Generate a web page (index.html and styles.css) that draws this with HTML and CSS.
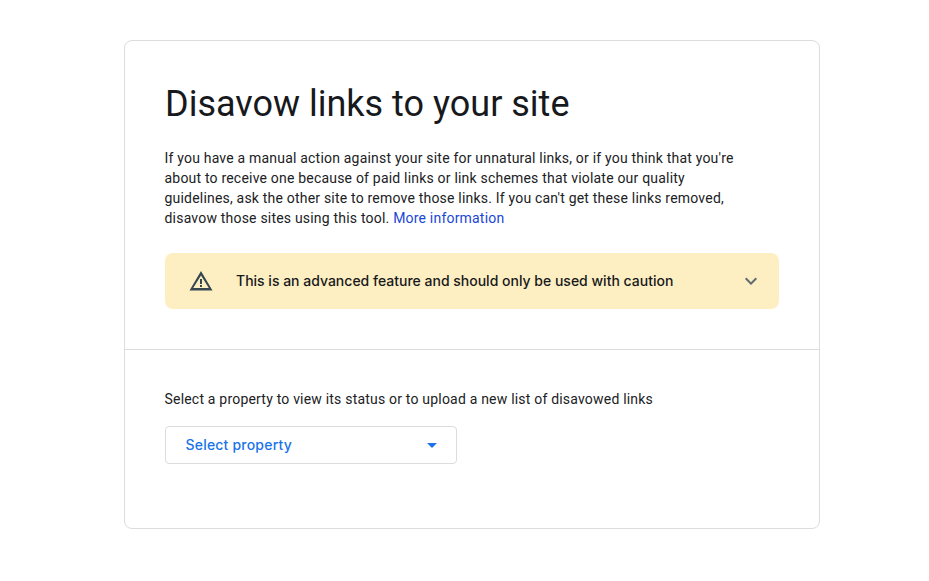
FILE: index.html
```html
<!DOCTYPE html>
<html lang="en">
<head>
    <meta charset="UTF-8">
    <title>Disavow links to your site</title>
    <link rel="stylesheet" href="styles.css">
</head>
<body>
<div class="card">
    <section class="intro">
        <h1>Disavow links to your site</h1>
        <p class="description">If you have a manual action against your site for unnatural links, or if you think that you're about to receive one because of paid links or link schemes that violate our quality guidelines, ask the other site to remove those links. If you can't get these links removed, disavow those sites using this tool. <a href="#">More information</a></p>
        <div class="warning">
            <svg class="warning-icon" viewBox="0 0 24 24" width="24" height="24">
                <path fill="#37474f" fill-rule="evenodd" d="M12 2 .5 21.5h23L12 2zm0 4.4L19.8 19H4.2L12 6.4zM11 10v5h2v-5h-2zm0 6v2h2v-2h-2z"/>
            </svg>
            <span class="warning-text">This is an advanced feature and should only be used with caution</span>
            <svg class="warning-chevron" viewBox="0 0 24 24" width="24" height="24">
                <path fill="#5f6b6d" d="M7.41 8.59 12 13.17l4.59-4.58L18 10l-6 6-6-6z"/>
            </svg>
        </div>
    </section>
    <section class="property">
        <p class="property-label">Select a property to view its status or to upload a new list of disavowed links</p>
        <div class="select">
            <span class="select-text">Select property</span>
            <span class="select-arrow"></span>
        </div>
    </section>
</div>
</body>
</html>
```

FILE: styles.css
```css
body {
    margin: 0;
    background-color: #fff;
    font-family: Roboto, "Liberation Sans", sans-serif;
    color: #202124;
}

.card {
    box-sizing: border-box;
    width: 696px;
    height: 489px;
    margin: 40px 0 0 124px;
    border: 1px solid #dadce0;
    border-radius: 8px;
}

.intro {
    padding: 41px 40px 40px;
    border-bottom: 1px solid #dadce0;
}

h1 {
    margin: 0 0 22px;
    font-size: 36px;
    line-height: 44px;
    font-weight: 400;
    color: #17191c;
}

.description {
    margin: 0 0 25px -0.5px;
    width: 580px;
    font-size: 14px;
    line-height: 20px;
    letter-spacing: 0.2px;
}

.description a {
    color: #1a46d6;
    text-decoration: none;
}

.warning {
    display: flex;
    align-items: center;
    height: 56px;
    padding: 0 16px 0 24px;
    background-color: #feefc3;
    border-radius: 8px;
}

.warning-icon {
    margin-right: 23px;
}

.warning-text {
    flex: 1;
    padding-bottom: 2px;
    font-family: Inter, Roboto, sans-serif;
    font-size: 14px;
    font-weight: 500;
    color: #17191c;
}

.property {
    padding: 39px 40px 0;
}

.property-label {
    margin: 0 0 17px -0.5px;
    font-size: 14px;
    line-height: 20px;
    letter-spacing: 0.2px;
}

.select {
    box-sizing: border-box;
    display: flex;
    align-items: center;
    justify-content: space-between;
    width: 292px;
    height: 38px;
    padding: 0 19px 0 19.5px;
    border: 1px solid #dadce0;
    border-radius: 4px;
}

.select-text {
    padding-bottom: 2px;
    font-family: Inter, Roboto, sans-serif;
    font-size: 14px;
    font-weight: 500;
    letter-spacing: 0.2px;
    color: #1a73e8;
}

.select-arrow {
    width: 0;
    height: 0;
    border-left: 5px solid transparent;
    border-right: 5px solid transparent;
    border-top: 5px solid #1a73e8;
}
```
